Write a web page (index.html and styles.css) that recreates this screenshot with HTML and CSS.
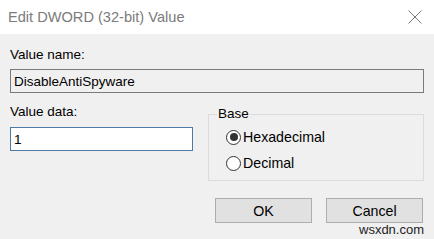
FILE: index.html
```html
<!DOCTYPE html>
<html lang="en">
<head>
    <meta charset="UTF-8">
    <title>Edit DWORD (32-bit) Value</title>
    <link rel="stylesheet" href="styles.css">
</head>
<body>

<div class="titlebar">
    <span class="title">Edit DWORD (32-bit) Value</span>
    <svg class="close" width="14" height="14" viewBox="0 0 14 14">
        <path d="M0.5 0.5 L13.5 13.5 M13.5 0.5 L0.5 13.5" stroke="#7a7a7a" stroke-width="1" fill="none"/>
    </svg>
</div>

<div class="content">
    <!-- Value name -->
    <label class="field-label" for="valueName">Value name:</label>
    <input class="field name-field" id="valueName" type="text" value="DisableAntiSpyware" readonly>

    <div class="row">
        <!-- Value data -->
        <div class="data-col">
            <label class="field-label" for="valueData">Value data:</label>
            <input class="field data-field" id="valueData" type="text" value="1">
        </div>

        <!-- Base -->
        <fieldset class="base">
            <legend>Base</legend>
            <div class="radio-row"><span class="radio checked"></span>Hexadecimal</div>
            <div class="radio-row"><span class="radio"></span>Decimal</div>
        </fieldset>
    </div>

    <div class="buttons">
        <button type="button">OK</button>
        <button type="button">Cancel</button>
    </div>
</div>

<span class="watermark">wsxdn.com</span>

</body>
</html>
```

FILE: styles.css
```css
body {
    margin: 0;
    width: 434px;
    height: 239px;
    overflow: hidden;
    background-color: #f0f0f0;
    font-family: "Liberation Sans", Arial, sans-serif;
    font-size: 13.5px;
    color: #000;
    position: relative;
}
.titlebar {
    height: 34px;
    background-color: #ffffff;
    display: flex;
    align-items: center;
    justify-content: space-between;
    padding: 0 12px 0 8px;
}
.title {
    font-size: 14.6px;
    color: #7b7b7b;
}
.close {
    display: block;
    margin-top: -1px;
}
.content {
    padding: 13px 10px 0 10px;
}
.field-label {
    display: block;
    line-height: 16px;
}
.field {
    display: block;
    box-sizing: border-box;
    height: 24px;
    margin: 6px 0 0 0;
    padding: 0 0 0 3px;
    font-family: inherit;
    font-size: 13.5px;
    color: #000;
    outline: none;
}
.name-field {
    width: 414px;
    background-color: #f0f0f0;
    border: 1px solid #7a7a7a;
}
.row {
    display: flex;
    gap: 15px;
    margin-top: 11px;
}
.data-col {
    width: 183px;
}
.data-field {
    width: 183px;
    margin-top: 7px;
    background-color: #ffffff;
    border: 1px solid #4c79a5;
}
.base {
    box-sizing: border-box;
    width: 216px;
    height: 75px;
    margin: 2px 0 0 0;
    padding: 2px 0 0 18px;
    border: 1px solid #dcdcdc;
}
.base legend {
    padding: 0 1px;
    margin-left: -10px;
    line-height: 16px;
}
.radio-row {
    display: flex;
    align-items: center;
    gap: 2px;
    height: 26px;
    font-size: 14.2px;
    margin-left: -1px;
}
.radio {
    box-sizing: border-box;
    width: 15px;
    height: 15px;
    border: 1px solid #333;
    border-radius: 50%;
    background-color: #fff;
    display: flex;
    align-items: center;
    justify-content: center;
}
.radio.checked::after {
    content: "";
    width: 8px;
    height: 8px;
    border-radius: 50%;
    background-color: #333;
}
.buttons {
    display: flex;
    justify-content: flex-end;
    gap: 14px;
    margin-top: 17px;
    padding-right: 1px;
}
button {
    box-sizing: border-box;
    width: 97px;
    height: 25px;
    background-color: #e1e1e1;
    border: 1px solid #adadad;
    font-family: inherit;
    font-size: 14.2px;
    color: #000;
    padding: 0;
}
.watermark {
    position: absolute;
    left: 359px;
    top: 222px;
    font-size: 13px;
    color: #222;
}
```
